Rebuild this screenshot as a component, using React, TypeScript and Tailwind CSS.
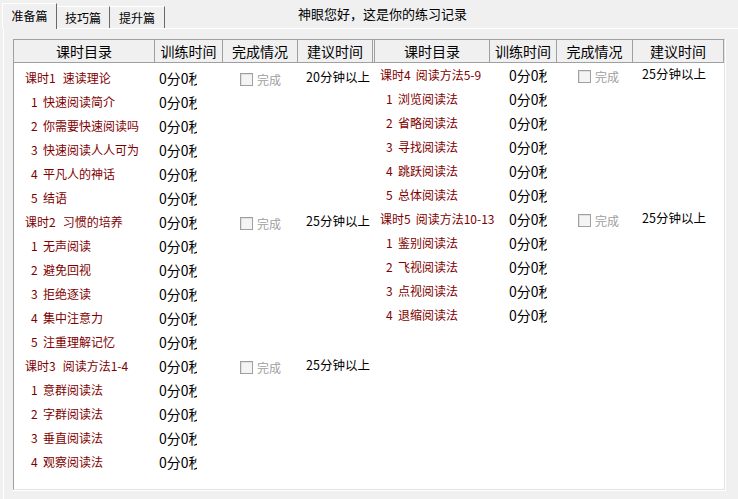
import React from "react";

type Row = { label: string; num?: string; main?: boolean; suggest?: string };

const leftRows: Row[] = [
  { label: "课时1 速读理论", main: true, suggest: "20分钟以上" },
  { num: "1", label: "快速阅读简介" },
  { num: "2", label: "你需要快速阅读吗" },
  { num: "3", label: "快速阅读人人可为" },
  { num: "4", label: "平凡人的神话" },
  { num: "5", label: "结语" },
  { label: "课时2 习惯的培养", main: true, suggest: "25分钟以上" },
  { num: "1", label: "无声阅读" },
  { num: "2", label: "避免回视" },
  { num: "3", label: "拒绝逐读" },
  { num: "4", label: "集中注意力" },
  { num: "5", label: "注重理解记忆" },
  { label: "课时3 阅读方法1-4", main: true, suggest: "25分钟以上" },
  { num: "1", label: "意群阅读法" },
  { num: "2", label: "字群阅读法" },
  { num: "3", label: "垂直阅读法" },
  { num: "4", label: "观察阅读法" },
];

const rightRows: Row[] = [
  { label: "课时4 阅读方法5-9", main: true, suggest: "25分钟以上" },
  { num: "1", label: "浏览阅读法" },
  { num: "2", label: "省略阅读法" },
  { num: "3", label: "寻找阅读法" },
  { num: "4", label: "跳跃阅读法" },
  { num: "5", label: "总体阅读法" },
  { label: "课时5 阅读方法10-13", main: true, suggest: "25分钟以上" },
  { num: "1", label: "鉴别阅读法" },
  { num: "2", label: "飞视阅读法" },
  { num: "3", label: "点视阅读法" },
  { num: "4", label: "退缩阅读法" },
];

function Check() {
  return (
    <div className="flex items-center mt-[3px]">
      <div className="w-[13px] h-[13px] border border-[#a0a0a0] bg-[#f4f4f4] shadow-[inset_1px_1px_0_#e0e0e0]" />
      <span className="ml-[4px] text-[12px] leading-[14px] text-[#a0a0a0]">完成</span>
    </div>
  );
}

function Time({ pl }: { pl: string }) {
  return (
    <div className={pl}>
      <div className="w-[38px] overflow-hidden whitespace-nowrap text-[14px] leading-[18px] text-black">0分0秒</div>
    </div>
  );
}

function MainLabel({ label, gap }: { label: string; gap: string }) {
  const [a, b] = label.split(" ");
  return (
    <>
      <span>{a}</span>
      <span className={gap}>{b}</span>
    </>
  );
}

function LeftRow({ r }: { r: Row }) {
  return (
    <div className="flex h-[24px] items-center">
      <div className="w-[141px] flex items-center text-[12px] text-[#800000] whitespace-nowrap">
        {r.main ? (
          <span className="pl-[11px]">
            <MainLabel label={r.label} gap="ml-[7px]" />
          </span>
        ) : (
          <>
            <span className="pl-[17px] w-[29px] inline-block">{r.num}</span>
            <span>{r.label}</span>
          </>
        )}
      </div>
      <div className="w-[68px]">
        <Time pl="pl-[4px]" />
      </div>
      <div className="w-[75px] pl-[17px]">{r.main && <Check />}</div>
      <div className="w-[75px] pl-[8px] text-[12.5px] leading-[16px] whitespace-nowrap -mt-[2px]">{r.suggest}</div>
    </div>
  );
}

function RightRow({ r }: { r: Row }) {
  return (
    <div className="flex h-[24px] items-center">
      <div className="w-[115px] flex items-center text-[12px] text-[#800000] whitespace-nowrap">
        {r.main ? (
          <span className="pl-[5px]">
            <MainLabel label={r.label} gap="ml-[5px]" />
          </span>
        ) : (
          <>
            <span className="pl-[11px] w-[23px] inline-block">{r.num}</span>
            <span>{r.label}</span>
          </>
        )}
      </div>
      <div className="w-[67px]">
        <Time pl="pl-[19px]" />
      </div>
      <div className="w-[76px] pl-[21px]">{r.main && <Check />}</div>
      <div className="w-[91px] pl-[9px] text-[12.5px] leading-[16px] whitespace-nowrap -mt-[2px]">{r.suggest}</div>
    </div>
  );
}

const hCell = "flex items-center justify-center border-r border-[#a0a0a0] text-[14px] text-black whitespace-nowrap";

export default function App() {
  return (
    <div className="w-[738px] h-[499px] bg-[#f0f0f0] overflow-hidden font-['Noto_Sans_CJK_SC','Noto_Sans',sans-serif] text-black">
      {/* top bar */}
      <div className="flex h-[28px] items-end">
        <div className="flex items-end pl-[2px] h-full">
          <div className="relative z-10 -mb-px h-[26px] w-[55px] bg-[#f0f0f0] border-l border-t border-white border-r border-r-[#696969] text-[12px] leading-[17px] pt-[3px] flex justify-center">
            准备篇
          </div>
          <div className="h-[22px] w-[53px] border-t border-white border-r border-r-[#696969] text-[12px] leading-[17px] pt-[2px] flex justify-center">
            技巧篇
          </div>
          <div className="h-[22px] w-[55px] border-t border-white border-r border-r-[#696969] text-[12px] leading-[17px] pt-[2px] flex justify-center">
            提升篇
          </div>
        </div>
        <div className="self-stretch ml-[133px] text-[13px] leading-[28px] whitespace-nowrap">神眼您好，这是你的练习记录</div>
      </div>
      {/* panel */}
      <div className="ml-[3px] h-[471px] border-l border-t border-white">
        <div className="mt-[10px] ml-[9px] w-[713px] h-[452px] border-r border-b border-white">
          <div className="h-full flex flex-col bg-white border-l border-t border-[#a0a0a0] border-r border-b border-r-[#e3e3e3] border-b-[#e3e3e3]">
            <div className="flex h-[23px] shrink-0 bg-[#f0f0f0] border-b border-[#a0a0a0]">
              <div className={`${hCell} w-[141px]`}>课时目录</div>
              <div className={`${hCell} w-[68px]`}>训练时间</div>
              <div className={`${hCell} w-[75px]`}>完成情况</div>
              <div className={`${hCell} w-[75px]`}>建议时间</div>
              <div className={`${hCell} w-[2px]`}></div>
              <div className={`${hCell} w-[115px]`}>课时目录</div>
              <div className={`${hCell} w-[67px]`}>训练时间</div>
              <div className={`${hCell} w-[76px]`}>完成情况</div>
              <div className={`${hCell} w-[91px]`}>建议时间</div>
            </div>
            <div className="flex flex-1">
              <div className="w-[361px] pt-[3px] flex flex-col">
                {leftRows.map((r, i) => (
                  <LeftRow key={i} r={r} />
                ))}
              </div>
              <div className="w-[349px] flex flex-col">
                {rightRows.map((r, i) => (
                  <RightRow key={i} r={r} />
                ))}
              </div>
            </div>
          </div>
        </div>
      </div>
    </div>
  );
}
